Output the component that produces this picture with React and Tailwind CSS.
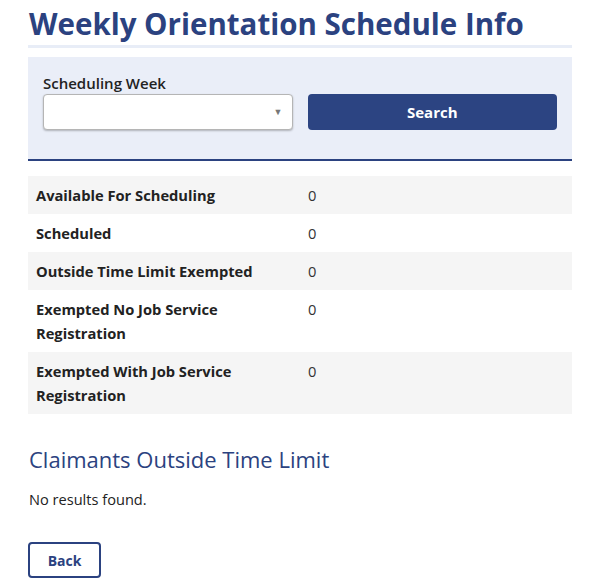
import React from "react";

const rows = [
  { label: "Available For Scheduling", value: "0" },
  { label: "Scheduled", value: "0" },
  { label: "Outside Time Limit Exempted", value: "0" },
  { label: "Exempted No Job Service Registration", value: "0" },
  { label: "Exempted With Job Service Registration", value: "0" },
];

export default function App() {
  return (
    <div className="min-h-[585px] w-[595px] bg-white text-[#222] font-['Open_Sans',sans-serif]">
      <div className="ml-[28px] w-[544px] pt-[4px]">
        {/* Title */}
        <h1 className="text-[29.5px] leading-[40px] font-bold text-[#2b4280] pl-[1px]">
          Weekly Orientation Schedule Info
        </h1>
        <div className="mt-[1px] h-[3px] bg-[#e8edf7]" />

        {/* Search panel */}
        <div className="mt-[9px] bg-[#eaeef8] border-b-2 border-[#2b4280] px-[15px] pt-[16px] pb-[29px]">
          <label className="block text-[15px] leading-[20px] font-semibold text-[#222]">
            Scheduling Week
          </label>
          <div className="flex gap-[15px] mt-[1px]">
            <div className="relative w-[250px] h-[36px] bg-white border border-[#b5b5b5] rounded-[4px] shadow-[0_1px_2px_rgba(0,0,0,0.25)]">
              <span className="absolute right-[9px] top-[10px] text-[9px] text-[#777]">▼</span>
            </div>
            <button className="w-[250px] h-[36px] bg-[#2c4482] rounded-[4px] text-white text-[15px] font-bold">
              Search
            </button>
          </div>
        </div>

        {/* Stats table */}
        <div className="mt-[15px]">
          {rows.map((r, i) => (
            <div
              key={r.label}
              className={`flex px-[8px] py-[7px] text-[14.7px] leading-[24px] ${
                i % 2 === 0 ? "bg-[#f5f5f5]" : "bg-white"
              }`}
            >
              <div className="w-[272px] pr-[20px] font-bold text-[#222]">{r.label}</div>
              <div className="text-[#333]">{r.value}</div>
            </div>
          ))}
        </div>

        {/* Claimants */}
        <h2 className="mt-[31px] text-[22px] leading-[28px] text-[#2b4280] pl-[1px]">
          Claimants Outside Time Limit
        </h2>
        <p className="mt-[16px] text-[14.6px] leading-[20px] text-[#222] pl-[1px]">
          No results found.
        </p>

        <button className="mt-[33px] w-[73px] h-[36px] border-2 border-[#2b4280] rounded-[4px] text-[#2b4280] text-[14px] font-bold">
          Back
        </button>
      </div>
    </div>
  );
}
